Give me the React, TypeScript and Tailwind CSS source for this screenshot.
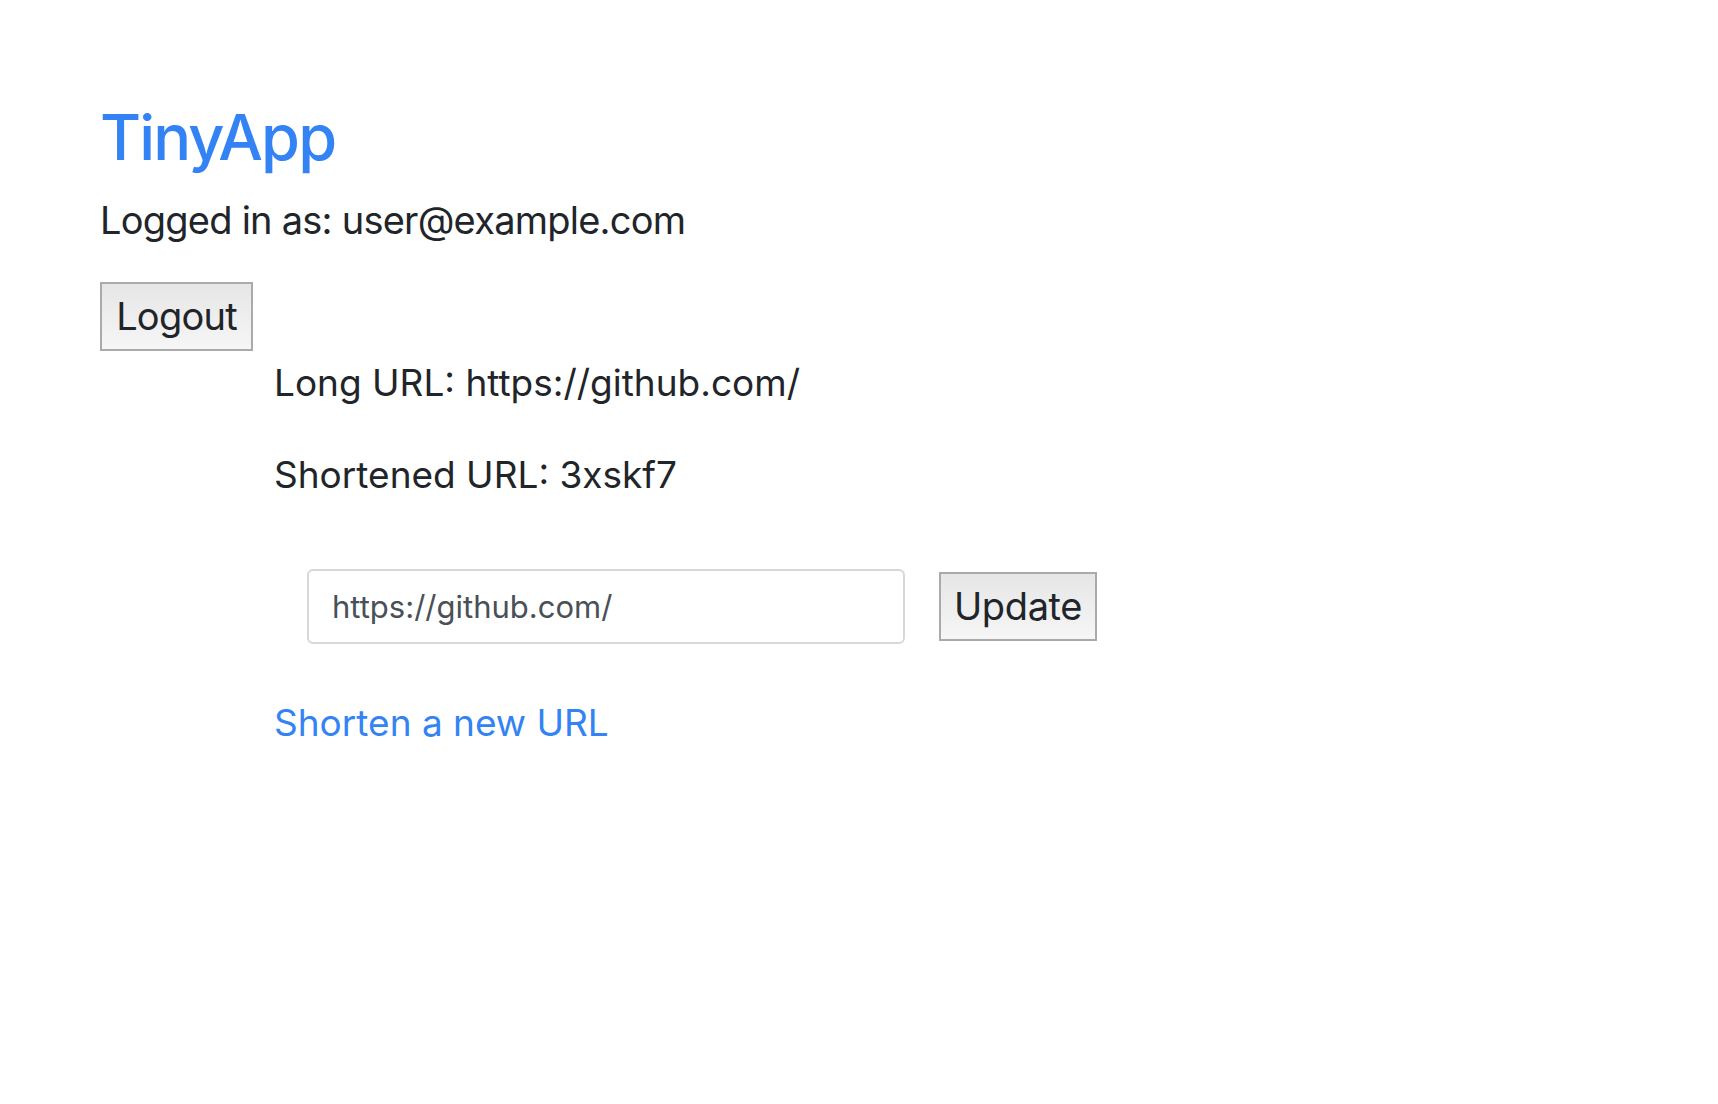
export default function App() {
  return (
    <div
      className="min-h-screen bg-white pl-[100px] pt-[99px] text-[#212529]"
      style={{ fontFamily: "Inter, 'Noto Sans', sans-serif" }}
    >
      <h1 className="text-[63px] leading-[77px] font-medium tracking-[-0.03em] text-[#3383f5]">TinyApp</h1>
      <div className="mt-[20px] text-[38px] leading-[48px] tracking-[-0.02em]">Logged in as: user@example.com</div>
      <button className="mt-[38px] flex h-[69px] w-[153px] items-center justify-center border-2 border-[#aaaaaa] bg-gradient-to-b from-[#e6e6e6] to-[#f6f6f6] text-[38px] leading-[47px] tracking-[-0.02em] text-[#212529]">
        Logout
      </button>

      <div className="ml-[174px] text-[37px] leading-[44px]">
        <p className="mt-[10px]">Long URL: https://github.com/</p>
        <p className="mt-[48px]">Shortened URL: 3xskf7</p>

        <form className="mt-[72px] ml-[33px] flex items-center gap-[34px]" onSubmit={(e) => e.preventDefault()}>
          <input
            type="text"
            defaultValue="https://github.com/"
            className="h-[75px] w-[598px] rounded-[6px] border-2 border-[#d3d8dd] bg-white pl-[23px] text-[31px] text-[#495057] outline-none"
          />
          <button className="flex h-[69px] w-[158px] items-center justify-center border-2 border-[#aaaaaa] bg-gradient-to-b from-[#e6e6e6] to-[#f6f6f6] text-[38px] leading-[47px] tracking-[-0.01em] text-[#212529]">
            Update
          </button>
        </form>

        <a href="#" className="mt-[57px] block w-fit text-[#3383f5]">
          Shorten a new URL
        </a>
      </div>
    </div>
  );
}
